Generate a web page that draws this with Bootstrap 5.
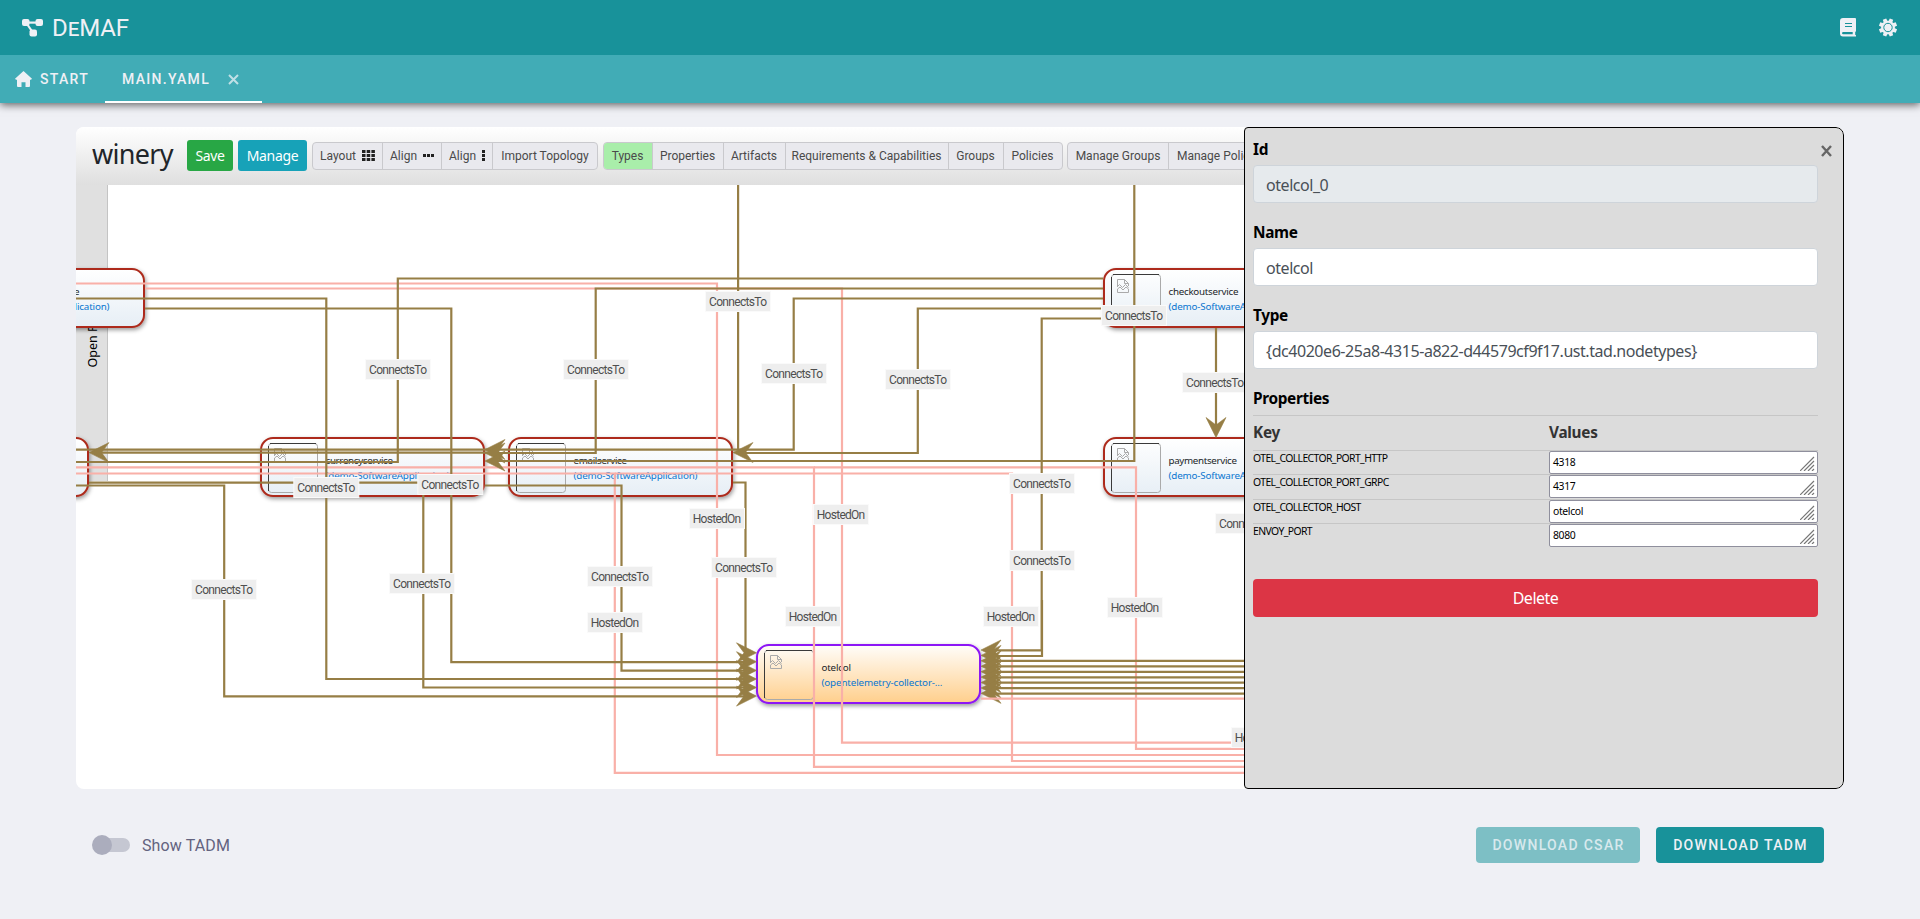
<!DOCTYPE html>
<html lang="en">
<head>
<meta charset="utf-8">
<title>DeMAF</title>
<link rel="stylesheet" href="https://cdn.jsdelivr.net/npm/bootstrap@5.3.0/dist/css/bootstrap.min.css">
<style>
body{background:#eff0f5;font-family:Roboto,sans-serif;height:919px;overflow:hidden}
.topbar{height:55px;background:#18929a;color:#eff0f5;padding:0 23px 0 22px;position:relative;z-index:2}
.brandname{font-size:24px;font-variant:small-caps;line-height:1;margin-left:9px;letter-spacing:-.1px}
.tabbar{height:48px;background:#41acb6;color:#eff0f5;box-shadow:0 2px 8px rgba(0,0,0,.6);font-size:14px;font-weight:500;letter-spacing:1.3px;position:relative}
.tabbar .tab{height:48px}
.tab-start{width:105px;padding-left:15px}
.tab-main{width:157px;padding:0 23px 0 17px;border-bottom:2px solid #fff;border-top:2px solid transparent}
.editor{width:1768px;height:662px;margin:24px 0 0 76px;border-radius:8px;background:#fff;overflow:hidden}
.workspace{width:1168px}
.toolstrip{height:58px;background:linear-gradient(#fff,#dfdfdf);padding-left:16px;white-space:nowrap}
.toolstrip>*{flex:none}
.winery{font-family:"Noto Sans",sans-serif;font-size:27px;color:#212529;width:95px;line-height:36px;margin-top:-5px;letter-spacing:-.7px}
.tbtn{height:31px;border-radius:3px;color:#fff;font:14px/31px "Noto Sans",sans-serif;text-align:center;letter-spacing:-.35px}
.segs{border:1px solid #c9c9cd;border-radius:4px;height:28px;background:#e9e9ee;font-size:12px;line-height:26px;color:#4a4a4a;overflow:hidden}
.segs span{flex:none;text-align:center;border-right:1px solid #c9c9cd}
.segs span:last-child{border-right:0}
.props{width:600px;border:1px solid #000;border-radius:4px 8px 8px 4px;background:#dcdcdc;padding:8px 0 0 8px;font-family:"Noto Sans",sans-serif;color:#000}
.props-form{width:565px}
.field-label{font-weight:700;font-size:15.4px;line-height:24px;height:30px;padding-top:2px;letter-spacing:-.35px}
.field-box{height:38px;border:1px solid #ced4da;border-radius:4px;background:#fff;color:#495057;padding:0 12px;font-size:16px;line-height:38px;margin:-1px 0 16px;letter-spacing:-.45px}
.field-box.off{background:#e6eaed}
.rowline{border-top:1px solid #c6c6c6;height:24.3px;font-size:10.4px;letter-spacing:-.6px}
.rowline .pkey{width:296px;line-height:14px}
.pval{width:269px;height:23px;border:1px solid #8f8f9d;border-radius:2px;background:#fff;line-height:21px;padding-left:3px;letter-spacing:-.35px}
.headline{height:35px;font-size:15.3px;font-weight:700;color:#333;line-height:33px;letter-spacing:-.25px}
.xbtn{width:33px;padding:0 0 0 3px}
.track{width:34px;height:14px;border-radius:7px;background:#c5c7d2;margin:0 4px 0 4px;position:relative}
.track i{position:absolute;left:-4px;top:-3px;width:20px;height:20px;border-radius:50%;background:#abadbd}
.footer-row{height:36px;margin:38px 96px 0 92px}
.dl{height:36px;border-radius:4px;background:#18929a;color:#eff0f5;font-size:14px;font-weight:500;letter-spacing:1.3px;line-height:36px;text-align:center;padding-left:1px}
.dl.dim{background:#7dbfc5;color:#d8e9ed}
</style>
</head>
<body>
<header class="topbar d-flex align-items-center">
  <svg width="21" height="18" viewBox="0 0 21 18" fill="#eff0f5"><path d="M5 2.500h11v2.200H5z"/><path d="M5 5l5.500 8" stroke="#eff0f5" stroke-width="2.200"/><rect width="7.500" height="7" rx="2"/><rect x="13.500" width="7.500" height="7" rx="2"/><rect x="7.500" y="10.500" width="7.500" height="7" rx="2"/></svg>
  <span class="brandname">DeMAF</span>
  <svg class="ms-auto" width="16" height="19" viewBox="0 0 16 19"><path d="M3 0h12a1 1 0 011 1v12.300l-.8.8v2.600l.8.6V18.500H3a3 3 0 01-3-3V3a3 3 0 013-3z" fill="#eff0f5"/><path d="M5 5.500h7M5 8.500h7" stroke="#18929a" stroke-width="1"/><path d="M3.200 14h9.500v2.300H3.200a1 1 0 010-2.300z" fill="#18929a"/></svg>
  <svg style="margin-left:23px" width="18" height="19" viewBox="-9 -9.500 18 19"><path id="sun" fill="#eff0f5"/><circle r="4.200" fill="none" stroke="#18929a" stroke-width="1"/></svg>
</header>
<nav class="tabbar d-flex">
  <div class="tab tab-start d-flex align-items-center pb-2 pt-1">
    <svg width="17" height="16" viewBox="0 0 17 16" fill="#eff0f5" class="mt-1"><path d="M8.500 0L17 7.800l-1 1h-1V15a1 1 0 01-1 1h-3.500v-4.700h-4V16H3a1 1 0 01-1-1V8.800H1l-1-1z"/></svg>
    <span class="mt-1" style="margin-left:8px">START</span>
  </div>
  <div class="tab tab-main d-flex align-items-center justify-content-between"><span>MAIN.YAML</span>
    <svg width="11" height="11" viewBox="0 0 11 11" stroke="#c0e0e6" stroke-width="2"><path d="M1 1l9 9M10 1l-9 9"/></svg></div>
</nav>

<main class="editor d-flex">
  <section class="workspace overflow-hidden">
    <div class="toolstrip d-flex align-items-center" id="strip">
      <div class="winery">winery</div>
      <div class="tbtn" style="width:46px;background:#28a745;margin:-1px 5px 0 0">Save</div>
      <div class="tbtn" style="width:69px;background:#17a2b8;margin:-1px 5px 0 0">Manage</div>
    </div>
    <svg id="graph" class="d-block" width="1168" height="604" viewBox="76 185 1168 604">
      <defs>
        <linearGradient id="gn" x2="0" y2="1"><stop offset="0" stop-color="#fff"/><stop offset="1" stop-color="#e6eef5"/></linearGradient>
        <linearGradient id="go" x2="0" y2="1"><stop offset="0" stop-color="#fffdfa"/><stop offset="1" stop-color="#ffcf8c"/></linearGradient>
        <filter id="sh" x="-5%" y="-10%" width="110%" height="130%"><feDropShadow dx="1" dy="2" stdDeviation="2" flood-opacity=".4"/></filter>
      </defs>
    </svg>
  </section>
  <aside class="props d-flex">
    <div class="props-form">
      <div class="field-label">Id</div><div class="field-box off">otelcol_0</div>
      <div class="field-label">Name</div><div class="field-box">otelcol</div>
      <div class="field-label">Type</div><div class="field-box">{dc4020e6-25a8-4315-a822-d44579cf9f17.ust.tad.nodetypes}</div>
      <div class="field-label">Properties</div>
      <div id="rows"></div>
      <button class="btn btn-danger w-100 rounded-1 p-0" style="height:38px;margin-top:32px;background:#dc3545;border:0;letter-spacing:-.5px">Delete</button>
    </div>
    <div class="xbtn"><svg width="11" height="13" viewBox="0 0 11 13" stroke="#666" stroke-width="2.400" style="margin-top:8px;display:block"><path d="M1 2l9 10M10 2L1 12"/></svg></div>
  </aside>
</main>
<div class="footer-row d-flex align-items-center">
  <div class="track"><i></i></div><span style="margin:2px 0 0 8px;color:#63637f;letter-spacing:.12px">Show TADM</span>
  <div class="dl dim ms-auto" style="width:164px">DOWNLOAD CSAR</div>
  <div class="dl" style="width:168px;margin-left:16px">DOWNLOAD TADM</div>
</div>
<script>
// eight-pointed gear
let sun='';for(let i=0;i<32;i++){const k=i%4,r=(k==0||k==3)?9.300:6.900,a=(i-1.500+(k==0?.5:k==3?-.5:0))*Math.PI/16;sun+=(i?'L':'M')+(r*Math.cos(a)).toFixed(2)+','+(r*Math.sin(a)).toFixed(2)}
document.getElementById('sun').setAttribute('d',sun+'z');

// toolbar button groups: [label, width, icon]
const grid='<svg width="13" height="11" viewBox="0 0 13 11" fill="#222" style="margin:-2px 0 0 6px"><path d="M0 0h3.500v3H0zM4.700 0h3.500v3H4.700zM9.400 0h3.500v3H9.400zM0 4h3.500v3H0zM4.700 4h3.500v3H4.700zM9.400 4h3.500v3H9.400zM0 8h3.500v3H0zM4.700 8h3.500v3H4.700zM9.400 8h3.500v3H9.400z"/></svg>';
const hd='<svg width="11" height="3" viewBox="0 0 11 3" fill="#222" style="margin:-2px 0 0 6px"><path d="M0 0h3v3H0zM4 0h3v3H4zM8 0h3v3H8z"/></svg>';
const vd='<svg width="3" height="11" viewBox="0 0 3 11" fill="#222" style="margin:-2px 0 0 6px"><path d="M0 0h3v3H0zM0 4h3v3H0zM0 8h3v3H0z"/></svg>';
[[['Layout',70,grid],['Align',59,hd],['Align',51,vd],['Import Topology',104]],
 [['Types',49],['Properties',71],['Artifacts',62],['Requirements &amp; Capabilities',163],['Groups',55],['Policies',58]],
 [['Manage Groups',101],['Manage Policies',104]]].forEach(g=>{
  document.getElementById('strip').insertAdjacentHTML('beforeend','<div class="segs d-flex" style="margin-right:4.500px">'+g.map(([t,w,i])=>`<span style="width:${w}px;${t=='Types'?'background:#a9eeaa':''}">${t}${i||''}</span>`).join('')+'</div>');
});

// property table
const grip='<svg class="float-end" width="15" height="15" viewBox="0 0 15 15" stroke="#777" stroke-width="1.200" style="margin:4px 2px 0 0"><path d="M0 15L14 1M4 15L14 5M8 15l6-6M12 15l2-2"/></svg>';
document.getElementById('rows').innerHTML='<div class="rowline headline d-flex"><div style="width:296px">Key</div><div>Values</div></div>'+
 [['OTEL_COLLECTOR_PORT_HTTP','4318'],['OTEL_COLLECTOR_PORT_GRPC','4317'],['OTEL_COLLECTOR_HOST','otelcol'],['ENVOY_PORT','8080']]
 .map(([k,v])=>`<div class="rowline d-flex"><div class="pkey">${k}</div><div class="pval">${grip}${v}</div></div>`).join('');

// topology graph
let s='<rect x="76" y="185" width="31" height="296" fill="#e0e0e0"/><path d="M107.500 185v296" stroke="#c4c4c4"/><text transform="translate(97,367.500) rotate(-90)" font-family="Noto Sans" font-size="12.500">Open Palette</text>';
const broken='<g fill="none" stroke="#aaa"><path d="M.5 8V.5h7l4 4V7M7.500 .5v4h4M.5 7.500l2-2 3 3 3-3 3 3M.5 13.500V10l2.500-2 3 3 3-3 2.500 2v3.500z"/></g>';
const node=(x,y,n,t,sel)=>{s+=`<g transform="translate(${x},${y})"><rect x="1" y="1" width="223" height="58" rx="12" fill="url(#${sel?'go':'gn'})" stroke="${sel?'#8c12f5':'#ad2c1c'}" stroke-width="2" filter="url(#sh)"/>
<rect x="8.500" y="6.500" width="49" height="49" rx="3" fill="none" stroke="#aaa"/><path d="M8.500 54V9M10 6.500h46" stroke="#3a3a3a"/><g transform="translate(14,11)">${broken}</g>
<g font-family="Noto Sans" font-size="9.800"><text x="65.500" y="26.500" fill="#212529" ${n[1]?`textLength="${n[1]}"`:''}>${n[0]}</text><text x="65.500" y="41.500" fill="#0a76d0" textLength="${t[1]}">${t[0]}</text></g></g>`};
const app=['(demo-SoftwareApplication)',124];
node(-80,268,['frontendservice',94],app);
node(-136,437,['cartservice'],app);
node(260,437,['currencyservice',67.500],app);node(508,437,['emailservice',53.500],app);
node(1103,268,['checkoutservice',70],app);node(1103,437,['paymentservice',68.500],app);
node(756,644,['otelcol',29.500],['(opentelemetry-collector-...',121],true);
const T='#967e45',P='#f9b0a8';
const ln=(c,d)=>s+=`<path d="${d}" fill="none" stroke="${c}" stroke-width="2.200"/>`;
const ar=(x,y,r)=>s+=`<path transform="translate(${x},${y}) rotate(${r})" d="M0 0L20 -10L12.500 0L20 10z" fill="${T}" stroke="${T}" stroke-width=".6"/>`;
['M76 283.500H717V755H1244','M145 288.500H842V742.700H1244','M76 467.300H814V766.800H1244','M814 467.300H1136V748.800H1244','M76 473.500H614.800V772.900H1244','M614.800 473.500H1012V761H1244'].forEach(d=>ln(P,d));
['M1103 278.500H397.800V462H76','M1103 288.500H595.700V453H495','M1103 298.500H793.700V449.700H76','M1103 308.500H917.800V453H745','M738.100 185V449.500','M1134.300 185V461H495','M1103 318.500H1041.700V650.300H990','M1042 600V656H990','M1216 328V425',
'M76 298.500H326.300V679H745','M145 308.500H451.300V662.200H745','M76 485.500H224.200V696.300H745','M89 482.600H423.300V687.500H745','M485 485.500H621.500V670.600H745','M733 482.500H745.500V650','M100 452.600H495'].forEach(d=>ln(T,d));
[660.800,666.400,671.900,677.300,682.700,688.200,693.600].forEach(y=>ln(T,`M990 ${y}H1244`));
ar(89,452.600,0);ar(485,449.500,0);ar(485,453,0);ar(485,461,0);ar(733,452.500,0);ar(1216,437.500,-90);
[652.800,661.700,670.400,679,687.500,696.100].forEach(y=>ar(756.500,y,180));
for(let i=0;i<9;i++)ar(981,650+i*5.420,0);
ln(P,'M981 698.600H1244');
const lab=(x,y,h)=>{const w=h?54:64;s+=`<rect x="${x-w/2-.5}" y="${y-10}" width="${w+1}" height="20" fill="#eee" stroke="#fafafa"/><text x="${x}" y="${y+4}" text-anchor="middle" font-family="Roboto" font-size="12" fill="#4f4f4f" textLength="${h?48.500:58}">${h?'HostedOn':'ConnectsTo'}</text>`};
[[398,369.500],[326.300,487.500],[450.300,484.500],[596,369.500],[738,301.500],[794,373.500],[918,379.500],[1134,315.500],[1215,382.500],[1042,483.500],[1248,523.500],[224,589.500],[422,583.500],[620,576.500],[615,622.500,1],[744,567.500],[717,518.500,1],[841,514.500,1],[813,616.500,1],[1042,560.500],[1011,616.500,1],[1135,607.500,1],[1259,737.500,1]].forEach(a=>lab(...a));
document.getElementById('graph').insertAdjacentHTML('beforeend',s);
</script>
<script src="https://cdn.jsdelivr.net/npm/bootstrap@5.3.0/dist/js/bootstrap.bundle.min.js"></script>
</body>
</html>
